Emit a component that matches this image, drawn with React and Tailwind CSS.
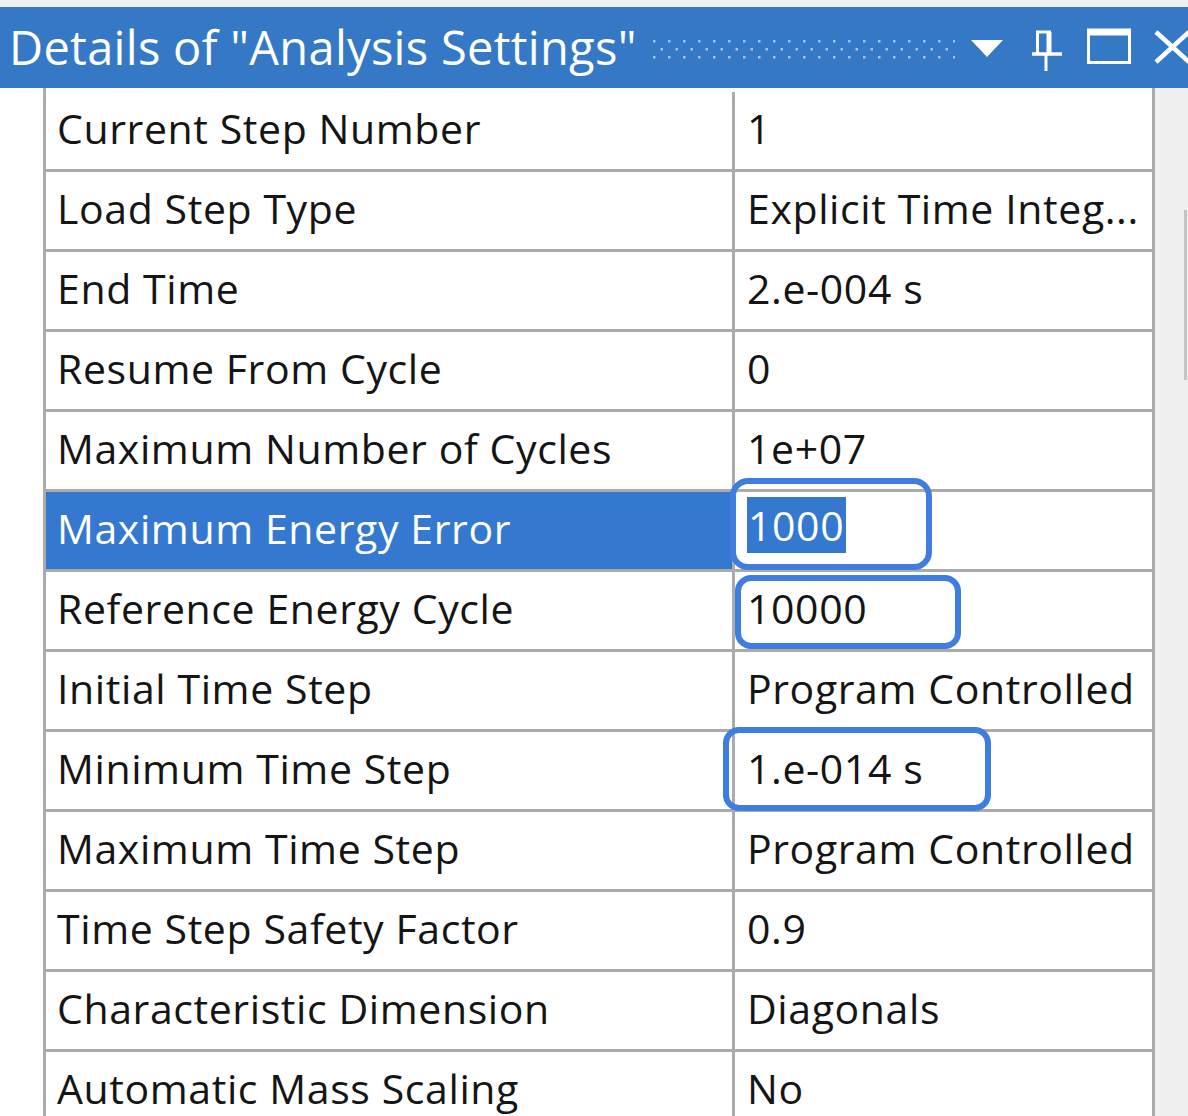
import React from 'react';

const rows = [
  ['Current Step Number', '1'],
  ['Load Step Type', 'Explicit Time Integ...'],
  ['End Time', '2.e-004 s'],
  ['Resume From Cycle', '0'],
  ['Maximum Number of Cycles', '1e+07'],
  ['Maximum Energy Error', '1000'],
  ['Reference Energy Cycle', '10000'],
  ['Initial Time Step', 'Program Controlled'],
  ['Minimum Time Step', '1.e-014 s'],
  ['Maximum Time Step', 'Program Controlled'],
  ['Time Step Safety Factor', '0.9'],
  ['Characteristic Dimension', 'Diagonals'],
  ['Automatic Mass Scaling', 'No'],
];

const SELECTED = 'Maximum Energy Error';

// drag grip between the caption and the window buttons
const DotStrip = () => (
  <svg width="302" height="20" className="shrink-0">
    <defs>
      <pattern id="grip" width="15" height="16" patternUnits="userSpaceOnUse">
        <rect x="0" y="0" width="2.5" height="2.5" fill="#a4c3ec" />
        <rect x="7.5" y="8" width="2.5" height="2.5" fill="#a4c3ec" />
      </pattern>
    </defs>
    <rect width="302" height="19" fill="url(#grip)" />
  </svg>
);

const TitleButtons = () => (
  <div className="flex items-center h-full shrink-0">
    <svg width="32" height="17" className="mt-[2px]">
      <path d="M0 0 H32 L16 17 Z" fill="#fff" />
    </svg>
    <svg width="32" height="42" className="ml-[28px] mt-[6px]">
      <path d="M5 2 H20" stroke="#fff" strokeWidth="3" />
      <path d="M6.5 2 V23" stroke="#fff" strokeWidth="3" />
      <path d="M18 2 V23" stroke="#fff" strokeWidth="5" />
      <path d="M1 24 H31" stroke="#fff" strokeWidth="3.5" />
      <path d="M15 25 V41" stroke="#fff" strokeWidth="3" />
    </svg>
    <svg width="44" height="36" className="ml-[24px] mt-[-3px]">
      <rect x="1.5" y="3" width="41" height="31.5" stroke="#fff" strokeWidth="3" fill="none" />
      <path d="M0 4 H44" stroke="#fff" strokeWidth="7" />
    </svg>
    <svg width="40" height="34" className="ml-[23px] mt-[-2px]">
      <path d="M2 2 L35 32 M35 2 L2 32" stroke="#fff" strokeWidth="4.5" />
    </svg>
  </div>
);

const Row = ({ name, value }) => {
  const selected = name === SELECTED;
  return (
    <div className="flex h-[80px] border-b-[3px] border-[#ababab]">
      <div
        className={
          'w-[689px] shrink-0 flex items-center pl-[11px] pb-[3px] border-r-[3px] border-[#ababab] ' +
          (selected ? 'bg-[#3478d0] text-white' : 'text-[#151515]')
        }
      >
        <span className="whitespace-nowrap">{name}</span>
      </div>
      <div className="flex-1 min-w-0 flex items-center pl-[12px] pb-[3px] text-[#151515]">
        {selected ? (
          <span className="bg-[#3478d0] text-white pl-[1px] pr-[2px] leading-[56px] h-[56px] -mt-[8px]">{value}</span>
        ) : (
          <span className="whitespace-nowrap">{value}</span>
        )}
      </div>
    </div>
  );
};

export default function App() {
  return (
    <div
      className="w-[1188px] h-[1116px] overflow-hidden bg-white relative"
      style={{ fontFamily: '"Open Sans", "Noto Sans", sans-serif' }}
    >
      <div className="h-[7px] bg-[#eef0f4]" />
      <div className="h-[81px] bg-[#3579c6] flex items-center pl-[9px] overflow-hidden">
        <span className="w-[624px] shrink-0 text-white text-[47px] tracking-[0.3px] whitespace-nowrap leading-none">
          Details of "Analysis Settings"
        </span>
        <div className="ml-[20px] mt-[4px] w-[318px] shrink-0">
          <DotStrip />
        </div>
        <TitleButtons />
      </div>

      <div className="flex h-[1028px]">
        <div className="w-[43px] shrink-0 bg-white" />
        <div className="w-[1112px] shrink-0 pt-[4px] border-l-[3px] border-r-[3px] border-[#ababab] text-[41px] tracking-[0.6px]">
          {rows.map(([n, v]) => (
            <Row key={n} name={n} value={v} />
          ))}
        </div>
        <div className="flex-1 bg-[#f0f0f0] relative">
          <div className="absolute right-[1px] top-[122px] w-[3px] h-[170px] bg-[#c4c4c4]" />
        </div>
      </div>

      {/* callout rings around edited values */}
      <div className="absolute left-[730px] top-[478px] w-[202px] h-[92px] border-[6px] border-[#3f7ee0] rounded-[18px]" />
      <div className="absolute left-[735px] top-[575px] w-[226px] h-[74px] border-[6px] border-[#3f7ee0] rounded-[16px]" />
      <div className="absolute left-[723px] top-[727px] w-[268px] h-[84px] border-[6px] border-[#3f7ee0] rounded-[16px]" />
    </div>
  );
}
